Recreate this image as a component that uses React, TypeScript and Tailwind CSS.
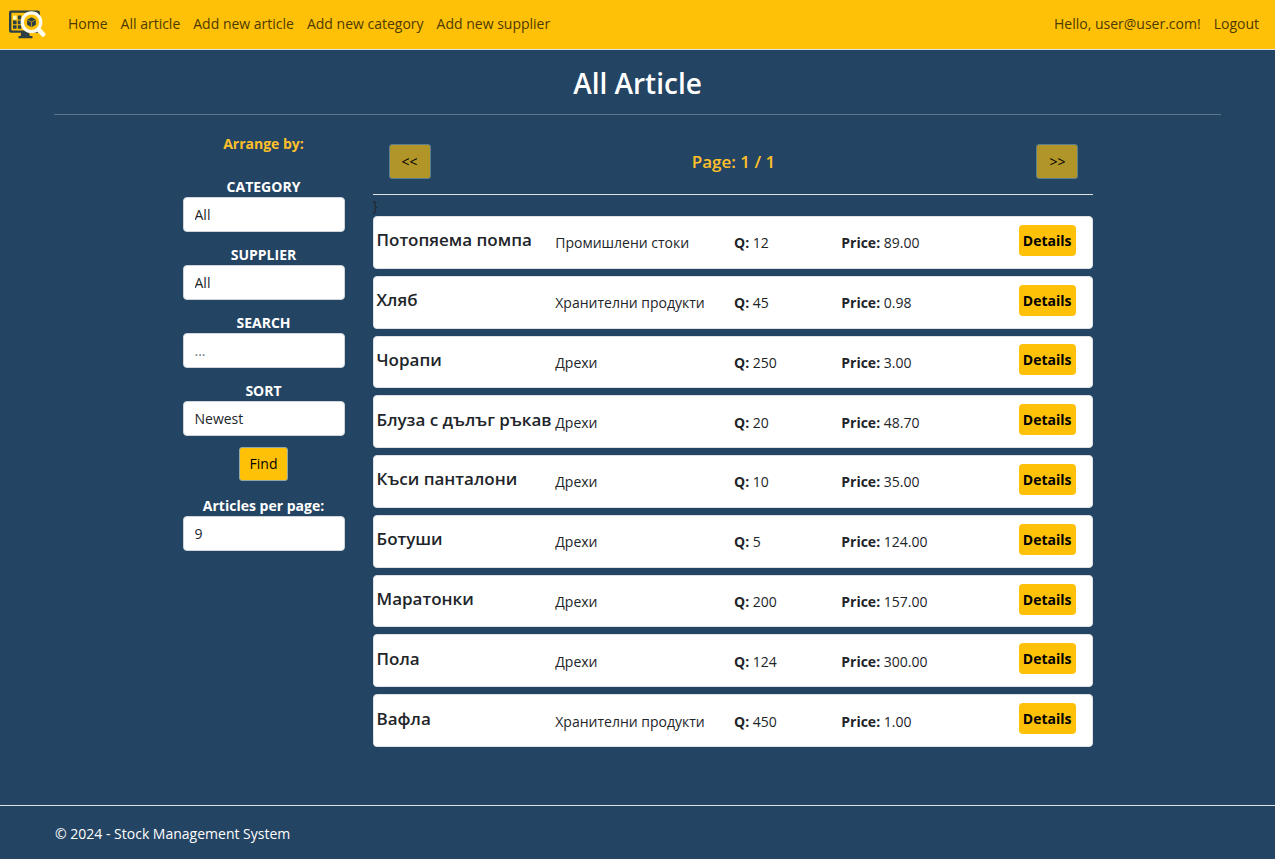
import React from "react";

const navLinks = ["Home", "All article", "Add new article", "Add new category", "Add new supplier"];

const articles = [
  { name: "Потопяема помпа", category: "Промишлени стоки", quantity: "12", price: "89.00" },
  { name: "Хляб", category: "Хранителни продукти", quantity: "45", price: "0.98" },
  { name: "Чорапи", category: "Дрехи", quantity: "250", price: "3.00" },
  { name: "Блуза с дълъг ръкав", category: "Дрехи", quantity: "20", price: "48.70" },
  { name: "Къси панталони", category: "Дрехи", quantity: "10", price: "35.00" },
  { name: "Ботуши", category: "Дрехи", quantity: "5", price: "124.00" },
  { name: "Маратонки", category: "Дрехи", quantity: "200", price: "157.00" },
  { name: "Пола", category: "Дрехи", quantity: "124", price: "300.00" },
  { name: "Вафла", category: "Хранителни продукти", quantity: "450", price: "1.00" },
];

const fieldClass =
  "block h-[35px] w-full appearance-none rounded border border-[#ced4da] bg-white px-[11px] text-sm text-[#212529] placeholder:text-[#6c757d]";
const labelClass = "block text-center text-sm leading-[21px] font-bold text-white";
const pagerClass = "h-[35px] w-[42px] rounded-[3px] border border-[#5b7f8c] bg-[#b19528] text-black";

function Logo() {
  return (
    <svg viewBox="0 0 38 30" className="h-[30px] w-[38px]" aria-hidden="true">
      <rect x="2.200" y="1.600" width="28.500" height="20" rx="0.800" fill="none" stroke="#2b3f45" strokeWidth="2.400" />
      <path d="M13 22h8l0.800 4h2.700v2.200H10.500V26h2.200z" fill="#2b3f45" />
      <path d="M5 5.600h3.600v4H5z" fill="#fff3b0" />
      <path d="M9.800 5.600h3.400v4h-3.400zM5 10.600h3.600v3.600H5zM9.800 10.600h3.400v3.600h-3.400zM5 15.200h3.600v3.600H5zM9.800 15.200h3.400v3.600h-3.400z" fill="#2b3f45" />
      <circle cx="23.500" cy="12.200" r="9.300" fill="#ffc107" stroke="#fffdf0" strokeWidth="3.200" />
      <path d="M30.600 19.600l4.500 4.800" stroke="#fffdf0" strokeWidth="4.600" strokeLinecap="round" />
      <path d="M23.500 7.200l4.400 2.200v5.400l-4.400 2.400-4.400-2.400V9.400z" fill="#2b3f45" />
      <path d="M19.100 9.600l4.400 2.400 4.400-2.400M23.500 12v5.200" fill="none" stroke="#d4a514" strokeWidth="0.800" />
    </svg>
  );
}

function Select({ id, label, options }: { id: string; label: string; options: string[] }) {
  return (
    <div>
      <label htmlFor={id} className={labelClass}>{label}</label>
      <select id={id} className={fieldClass}>
        {options.map((o) => <option key={o}>{o}</option>)}
      </select>
    </div>
  );
}

export default function App() {
  return (
    <div className="flex min-h-screen flex-col bg-[#244463] font-['Open_Sans','Noto_Sans',sans-serif] text-sm text-[#212529]">
      <header className="flex h-[50px] items-center border-b border-[#dee2e6] bg-[#ffc107] pr-4 pl-2 text-[#4d3a02]">
        <a href="#" aria-label="Stock Management System"><Logo /></a>
        <nav className="ml-[22px] flex flex-1 gap-[13px] pb-0.5">
          {navLinks.map((l) => <a key={l} href="#">{l}</a>)}
        </nav>
        <div className="flex gap-[13px] pb-0.5">
          <span>Hello, user@user.com!</span>
          <a href="#">Logout</a>
        </div>
      </header>

      <div className="mx-[54px] flex-1 pb-[58px]">
        <h1 className="border-b border-[#5b7590] pt-[14px] pb-[11px] text-center text-[28px] leading-[39px] font-semibold text-white">
          All Article
        </h1>
        <div className="mt-[15px] flex justify-center gap-7">
          <aside className="w-[162px] shrink-0 pt-[3px]">
            <h2 className="text-center leading-[21px] font-bold text-[#ffc02a]">Arrange by:</h2>
            <form className="mt-[22px] flex flex-col" onSubmit={(e) => e.preventDefault()}>
              <div className="flex flex-col gap-3">
                <Select id="category" label="CATEGORY" options={["All"]} />
                <Select id="supplier" label="SUPPLIER" options={["All"]} />
                <div>
                  <label htmlFor="search" className={labelClass}>SEARCH</label>
                  <input id="search" type="text" placeholder="..." className={fieldClass} />
                </div>
                <Select id="sort" label="SORT" options={["Newest"]} />
              </div>
              <button type="submit" className="mt-[11px] mb-[14px] h-[34px] self-center rounded-[3px] border border-[#8fa7a8] bg-[#ffc107] px-[10px] text-black">
                Find
              </button>
              <Select id="per-page" label="Articles per page:" options={["9"]} />
            </form>
          </aside>

          <main className="max-w-[720px] min-w-0 flex-1">
            <div className="flex items-center justify-between border-b border-[#dee2e6] pt-[14px] pr-[14px] pb-[15px] pl-4">
              <button disabled className={pagerClass}>&lt;&lt;</button>
              <p className="text-[17px] leading-6 font-semibold text-[#ffc02a]">Page: 1 / 1</p>
              <button disabled className={pagerClass}>&gt;&gt;</button>
            </div>
            <div className="h-[21px] leading-[22px]">{"}"}</div>
            <ul className="grid min-h-[531px] auto-rows-fr gap-[7px]">
              {articles.map((a) => (
                <li key={a.name} className="grid grid-cols-[5fr_5fr_3fr_7fr] items-center rounded border border-[#dee2e6] bg-white pl-[3px]">
                  <h3 className="pb-1 text-[17px] leading-5 font-semibold whitespace-nowrap">{a.name}</h3>
                  <p className="pt-0.5">{a.category}</p>
                  <p className="pt-0.5"><b className="font-bold">Q:</b> {a.quantity}</p>
                  <div className="flex items-center justify-between pr-4">
                    <p className="pt-0.5"><b className="font-bold">Price:</b> {a.price}</p>
                    <a href="#" className="mb-1 rounded bg-[#ffc107] px-1 py-[5px] leading-[21px] font-bold text-black">Details</a>
                  </div>
                </li>
              ))}
            </ul>
          </main>
        </div>
      </div>

      <footer className="border-t border-[#dee2e6] px-[55px] pt-[17px] pb-[15px] leading-[21px] text-white">
        © 2024 - Stock Management System
      </footer>
    </div>
  );
}
